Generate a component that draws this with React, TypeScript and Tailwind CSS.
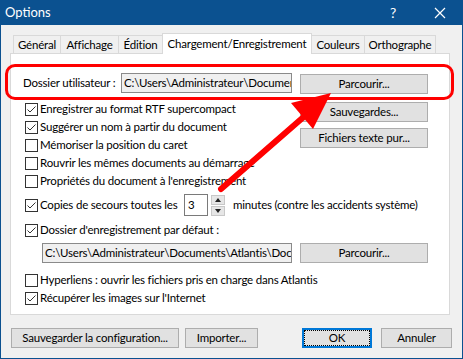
const font = { fontFamily: 'Lato, "Liberation Sans", sans-serif' }

function Check({ checked }: { checked?: boolean }) {
    return (
        <span className="w-[13px] h-[13px] border border-[#333] bg-white flex items-center justify-center shrink-0">
            {checked && (
                <svg width="11" height="11" viewBox="0 0 11 11">
                    <polyline points="1.5,5.5 4,8 9.5,2.5" fill="none" stroke="#333" strokeWidth="1" />
                </svg>
            )}
        </span>
    )
}

function CheckRow({ label, checked, className = "" }: { label: string; checked?: boolean; className?: string }) {
    return (
        <div className={"flex items-center gap-[2px] h-[18px] " + className}>
            <Check checked={checked} />
            <span className="whitespace-nowrap">{label}</span>
        </div>
    )
}

function Btn({ label, className = "" }: { label: string; className?: string }) {
    return (
        <div className={"h-[20px] bg-[#e1e1e1] border border-[#adadad] flex items-center justify-center whitespace-nowrap " + className}>
            {label}
        </div>
    )
}

const tabs = [
    { label: "Général", w: "w-[47px]" },
    { label: "Affichage", w: "w-[58px]" },
    { label: "Édition", w: "w-[44px]" },
    { label: "Chargement/Enregistrement", w: "w-[150px]", active: true },
    { label: "Couleurs", w: "w-[52px]", noLeft: true },
    { label: "Orthographe", w: "w-[72px]", last: true },
]

export default function App() {
    return (
        <div
            className="relative w-[463px] h-[359px] border border-[#0b5190] bg-[#f0f0f0] text-[11.5px] tracking-[-0.2px] text-black overflow-hidden"
            style={font}
        >
            {/* title bar */}
            <div className="h-[25px] bg-[#0b5190] text-white flex items-center -mt-px">
                <span className="pl-[4px] text-[13px] tracking-normal">Options</span>
                <span className="ml-auto mr-[38px] text-[14px]">?</span>
                <svg width="12" height="12" viewBox="0 0 12 12" className="mr-[16px]">
                    <path d="M1 1 L11 11 M11 1 L1 11" stroke="white" strokeWidth="1.2" />
                </svg>
            </div>

            {/* tabs */}
            <div className="flex items-end ml-[12px] mt-[9px] h-[20px] relative z-10">
                {tabs.map((t) =>
                    t.active ? (
                        <div
                            key={t.label}
                            className={t.w + " h-[21px] bg-white border-t border-l border-r border-[#d9d9d9] flex items-start justify-center pt-[1px] whitespace-nowrap"}
                        >
                            {t.label}
                        </div>
                    ) : (
                        <div
                            key={t.label}
                            className={
                                t.w +
                                " h-[18px] mb-px bg-[#f0f0f0] border-t border-[#d9d9d9] flex items-center justify-center whitespace-nowrap " +
                                (t.noLeft ? "" : "border-l ") +
                                (t.last ? "border-r" : "")
                            }
                        >
                            {t.label}
                        </div>
                    )
                )}
            </div>

            {/* panel */}
            <div className="ml-[9px] -mt-px w-[440px] h-[262px] bg-white border border-[#d9d9d9] flex flex-col">
                <div className="flex items-center h-[21px] mt-[18px] pl-[12px]">
                    <span className="w-[98px] whitespace-nowrap">Dossier utilisateur :</span>
                    <div className="w-[171px] h-[20px] bg-[#f0f0f0] border border-[#8a8a8a] pl-[2px] overflow-hidden whitespace-nowrap leading-[18px]">
                        C:\Users\Administrateur\Documents
                    </div>
                    <Btn label="Parcourir..." className="w-[128px] ml-[8px] mt-[2px]" />
                </div>

                <div className="flex mt-[7px] pl-[14px]">
                    <div className="w-[275px] flex flex-col">
                        <CheckRow label="Enregistrer au format RTF supercompact" checked />
                        <CheckRow label="Suggérer un nom à partir du document" checked />
                        <CheckRow label="Mémoriser la position du caret" />
                        <CheckRow label="Rouvrir les mêmes documents au démarrage" />
                        <CheckRow label="Propriétés du document à l'enregistrement" />
                    </div>
                    <div className="flex flex-col gap-[6px] pt-[2px]">
                        <Btn label="Sauvegardes..." className="w-[128px]" />
                        <Btn label="Fichiers texte pur..." className="w-[128px]" />
                    </div>
                </div>

                <div className="flex items-center h-[22px] mt-[4px] pl-[14px]">
                    <Check checked />
                    <span className="w-[146px] pl-[2px] whitespace-nowrap">Copies de secours toutes les</span>
                    <div className="w-[24px] h-[22px] border border-[#7a7a7a] flex items-center pl-[3px]">3</div>
                    <div className="ml-[3px] w-[14px] h-[21px] flex flex-col gap-px">
                        <div className="flex-1 bg-[#e6e6e6] border border-[#c8c8c8] flex items-center justify-center">
                            <svg width="6" height="4" viewBox="0 0 6 4"><path d="M0 4 L3 0 L6 4Z" fill="#222" /></svg>
                        </div>
                        <div className="flex-1 bg-[#e6e6e6] border border-[#c8c8c8] flex items-center justify-center">
                            <svg width="6" height="4" viewBox="0 0 6 4"><path d="M0 0 L3 4 L6 0Z" fill="#222" /></svg>
                        </div>
                    </div>
                    <span className="ml-[8px] whitespace-nowrap">minutes (contre les accidents système)</span>
                </div>

                <CheckRow label="Dossier d'enregistrement par défaut :" checked className="mt-[5px] pl-[14px]" />

                <div className="flex items-center h-[20px] mt-[4px] pl-[31px]">
                    <div className="w-[250px] h-[20px] bg-[#f0f0f0] border border-[#8a8a8a] pl-[2px] overflow-hidden whitespace-nowrap leading-[18px]">
                        C:\Users\Administrateur\Documents\Atlantis\Documents
                    </div>
                    <Btn label="Parcourir..." className="w-[128px] ml-[8px]" />
                </div>

                <CheckRow label="Hyperliens : ouvrir les fichiers pris en charge dans Atlantis" className="mt-[8px] pl-[14px]" />
                <CheckRow label="Récupérer les images sur l'Internet" checked className="pl-[14px]" />
            </div>

            {/* bottom buttons */}
            <div className="flex mt-[13px] ml-[10px]">
                <Btn label="Sauvegarder la configuration..." className="w-[168px]" />
                <Btn label="Importer..." className="w-[73px] ml-[6px]" />
                <div className="w-[70px] h-[20px] ml-[44px] bg-[#e1e1e1] border-2 border-[#0078d7] flex items-center justify-center">
                    <div className="w-full h-full border border-dotted border-black flex items-center justify-center">OK</div>
                </div>
                <Btn label="Annuler" className="w-[71px] ml-[9px]" />
            </div>

            {/* annotation overlay */}
            <div className="absolute left-[4px] top-[63px] w-[449px] h-[36px] border-[3px] border-[#ff0000] rounded-[10px] pointer-events-none" />
            <svg className="absolute left-0 top-0 pointer-events-none" width="463" height="359" viewBox="0 0 463 359">
                <line x1="220" y1="188" x2="306" y2="113" stroke="#ff0000" strokeWidth="6" strokeLinecap="round" />
                <polygon points="330,92 290,102 312,128" fill="#ff0000" />
            </svg>
        </div>
    )
}
